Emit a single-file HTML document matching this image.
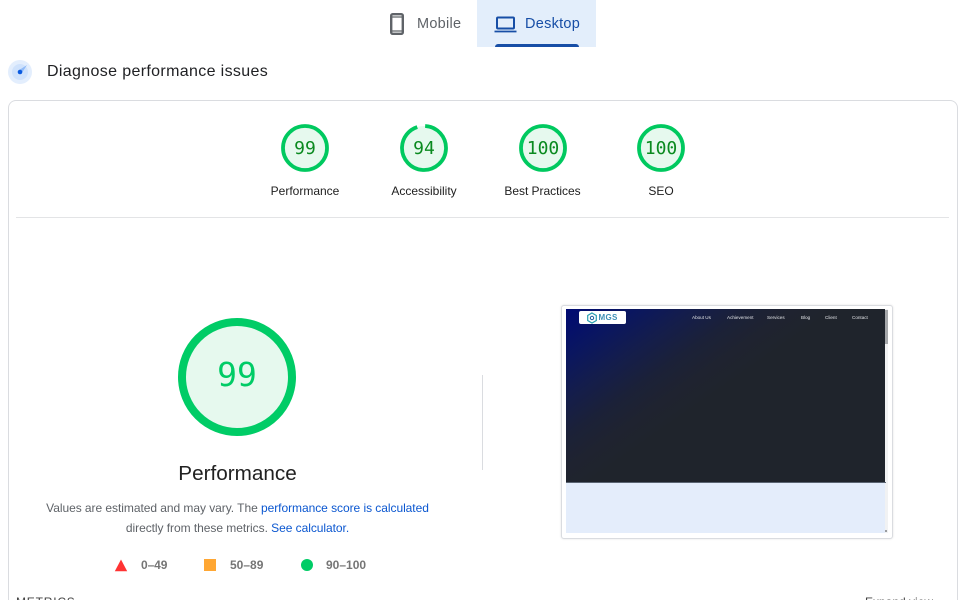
<!DOCTYPE html>
<html lang="en">
<head>
<meta charset="utf-8">
<title>PageSpeed Insights</title>
<style>
html,body{margin:0;padding:0;background:#fff;width:960px;height:600px;overflow:hidden}
body{font-family:"Liberation Sans",sans-serif}
#page{position:relative;width:960px;height:600px;overflow:hidden}
.abs{position:absolute}
.t{position:absolute;white-space:nowrap}
.c{transform:translateX(-50%);text-align:center}
.nav{position:absolute;top:315px;white-space:nowrap;font-size:4.600px;line-height:6px;color:#e2e4e8;filter:blur(.3px)}
a{color:#0b57d0;text-decoration:none}
</style>
</head>
<body>
<div id="page">
<!-- tabs -->
<div class="abs" style="left:477px;top:0;width:119px;height:47px;background:#e3eefb"></div>
<div class="abs" style="left:495px;top:44px;width:84px;height:3px;background:#174ea6;border-radius:3px 3px 0 0"></div>
<svg class="abs" style="left:384px;top:10px" width="26" height="28" viewBox="0 0 26 28"><rect x="7.200" y="4.200" width="11.600" height="19.600" rx="1.500" fill="none" stroke="#5f6368" stroke-width="2.400"/><path d="M7 7h12M7 21h12" stroke="#5f6368" stroke-width="1.200"/></svg>
<div class="t" style="left:417px;top:16px;font-size:14.500px;line-height:17px;color:#5f6368;letter-spacing:.27px;font-weight:400">Mobile</div>
<svg class="abs" style="left:493px;top:12px" width="26" height="24" viewBox="0 0 26 24"><rect x="4" y="5.500" width="17" height="11" rx="1" fill="none" stroke="#174ea6" stroke-width="2"/><path d="M1.500 19.500h22" stroke="#174ea6" stroke-width="1.800"/></svg>
<div class="t" style="left:525px;top:16px;font-size:14.500px;line-height:17px;color:#174ea6;letter-spacing:.27px">Desktop</div>

<!-- heading -->
<svg class="abs" style="left:8px;top:60px" width="24" height="24" viewBox="0 0 24 24"><circle cx="12" cy="12" r="12" fill="#e3eefd"/><circle cx="12" cy="12" r="8" fill="#cfe2fc"/><path d="M10.500 10.500L19 5L13.500 13.500Z" fill="#8fbaf8"/><circle cx="12" cy="12" r="2.300" fill="#0b5be0"/></svg>
<div class="t" style="left:47px;top:62px;font-size:16px;line-height:19px;color:#202124;letter-spacing:.35px">Diagnose performance issues</div>

<!-- card: bottom edge is below the fold in the reference -->
<div class="abs" style="left:8px;top:100px;width:948px;height:500px;border:1px solid #dadce0;border-bottom:0;border-radius:8px 8px 0 0"></div>

<!-- gauges -->
<svg class="abs" style="left:0;top:0" width="960" height="600" viewBox="0 0 960 600">
  <g fill="#e6f9ee">
    <circle cx="305" cy="148" r="22"/><circle cx="424" cy="148" r="22"/><circle cx="543" cy="148" r="22"/><circle cx="661" cy="148" r="22"/>
  </g>
  <g fill="none" stroke="#00c95f" stroke-width="3.800">
    <circle cx="305" cy="148" r="22"/>
    <circle cx="424" cy="148" r="22" stroke-dasharray="130 8.230" transform="rotate(-87 424 148)"/>
    <circle cx="543" cy="148" r="22"/>
    <circle cx="661" cy="148" r="22"/>
  </g>
  <circle cx="237" cy="377" r="55" fill="#e6f9ee" stroke="#00cc66" stroke-width="8"/>
</svg>
<div class="t c" style="left:305px;top:138px;font:18px/21px 'DejaVu Sans Mono',monospace;color:#0a8a1f">99</div>
<div class="t c" style="left:424px;top:138px;font:18px/21px 'DejaVu Sans Mono',monospace;color:#0a8a1f">94</div>
<div class="t c" style="left:543px;top:138px;font:18px/21px 'DejaVu Sans Mono',monospace;color:#0a8a1f">100</div>
<div class="t c" style="left:661px;top:138px;font:18px/21px 'DejaVu Sans Mono',monospace;color:#0a8a1f">100</div>

<div class="t c" style="left:305px;top:184px;font-size:12px;line-height:15px;color:#212121">Performance</div>
<div class="t c" style="left:424px;top:184px;font-size:12px;line-height:15px;color:#212121">Accessibility</div>
<div class="t c" style="left:542.500px;top:184px;font-size:12px;line-height:15px;color:#212121;letter-spacing:-.03px">Best Practices</div>
<div class="t c" style="left:661px;top:184px;font-size:12px;line-height:15px;color:#212121">SEO</div>

<div class="abs" style="left:16px;top:217px;width:933px;height:1px;background:#e3e4e6"></div>

<!-- big gauge -->
<div class="t c" style="left:237px;top:355px;font:33px/40px 'DejaVu Sans Mono',monospace;color:#00cc66">99</div>
<div class="t c" style="left:237.500px;top:462px;font-size:20.700px;line-height:24px;color:#212121">Performance</div>
<div class="t c" style="left:237.500px;top:498px;font-size:12px;line-height:20px;color:#5f6368;letter-spacing:-.05px">Values are estimated and may vary. The <a href="#">performance score is calculated</a><br>directly from these metrics. <a href="#">See calculator.</a></div>

<!-- legend -->
<svg class="abs" style="left:114px;top:559px" width="14" height="13" viewBox="0 0 14 13"><path d="M7 .5L13.200 12.200H.8Z" fill="#f33"/></svg>
<div class="t" style="left:141px;top:558px;font-size:12px;line-height:15px;font-weight:700;color:#757575;letter-spacing:-.1px">0–49</div>
<div class="abs" style="left:204px;top:559px;width:12px;height:12px;background:#ffa733"></div>
<div class="t" style="left:230px;top:558px;font-size:12px;line-height:15px;font-weight:700;color:#757575">50–89</div>
<div class="abs" style="left:301px;top:559px;width:12px;height:12px;border-radius:50%;background:#00cc66"></div>
<div class="t" style="left:326px;top:558px;font-size:12px;line-height:15px;font-weight:700;color:#757575">90–100</div>

<div class="abs" style="left:482px;top:375px;width:1px;height:95px;background:#dadce0"></div>

<!-- screenshot -->
<div class="abs" style="left:561px;top:305px;width:330px;height:232px;border:1px solid #dadce0;border-radius:3px;box-shadow:0 0 2px rgba(0,0,0,.12);background:#fff"></div>
<div class="abs" style="left:566px;top:309px;width:320px;height:174px;background:linear-gradient(145deg,#000a73 0%,#0a1660 12%,#141d4c 22%,#1b2138 32%,#1f2330 40%,#1f242c 48%,#1f242c 100%)"></div>
<div class="abs" style="left:566px;top:483px;width:322px;height:50px;background:#e4edfb"></div>
<div class="abs" style="left:885px;top:309px;width:3px;height:224px;background:#f1f2f3"></div>
<div class="abs" style="left:885px;top:310px;width:3px;height:34px;background:#a5a7aa"></div>
<div class="abs" style="left:566px;top:482px;width:320px;height:1px;background:#5a6472"></div>
<div class="abs" style="left:579px;top:311px;width:47px;height:13px;background:#fff;border-radius:2px"></div>
<svg class="abs" style="left:586px;top:312px" width="12" height="12" viewBox="0 0 12 12"><path d="M6 1l4.300 2.500v5L6 11 1.700 8.500v-5Z" fill="none" stroke="#2a9fb0" stroke-width="1.200"/><circle cx="6" cy="6" r="1.700" fill="none" stroke="#1d5f9e" stroke-width="1"/></svg>
<div class="t" style="left:598.500px;top:313px;font-size:8px;line-height:9px;font-weight:700;color:#3d8fb5;letter-spacing:.3px;filter:blur(.3px)">MGS</div>
<div class="nav" style="left:692px">About Us</div>
<div class="nav" style="left:727px">Achievement</div>
<div class="nav" style="left:767px">Services</div>
<div class="nav" style="left:801px">Blog</div>
<div class="nav" style="left:825px">Client</div>
<div class="nav" style="left:852px">Contact</div>
<div class="abs" style="left:885px;top:530px;width:2px;height:2px;background:#9a9c9f"></div>

<!-- bottom: text is cut by the fold, boxes end at the frame edge -->
<div class="t" style="left:16px;top:595px;height:5px;overflow:hidden;font-size:12px;line-height:15px;color:#424242;letter-spacing:.8px">METRICS</div>
<div class="t" style="left:865px;top:595px;height:5px;overflow:hidden;font-size:12px;line-height:15px;color:#424242">Expand view</div>
</div>
</body>
</html>
